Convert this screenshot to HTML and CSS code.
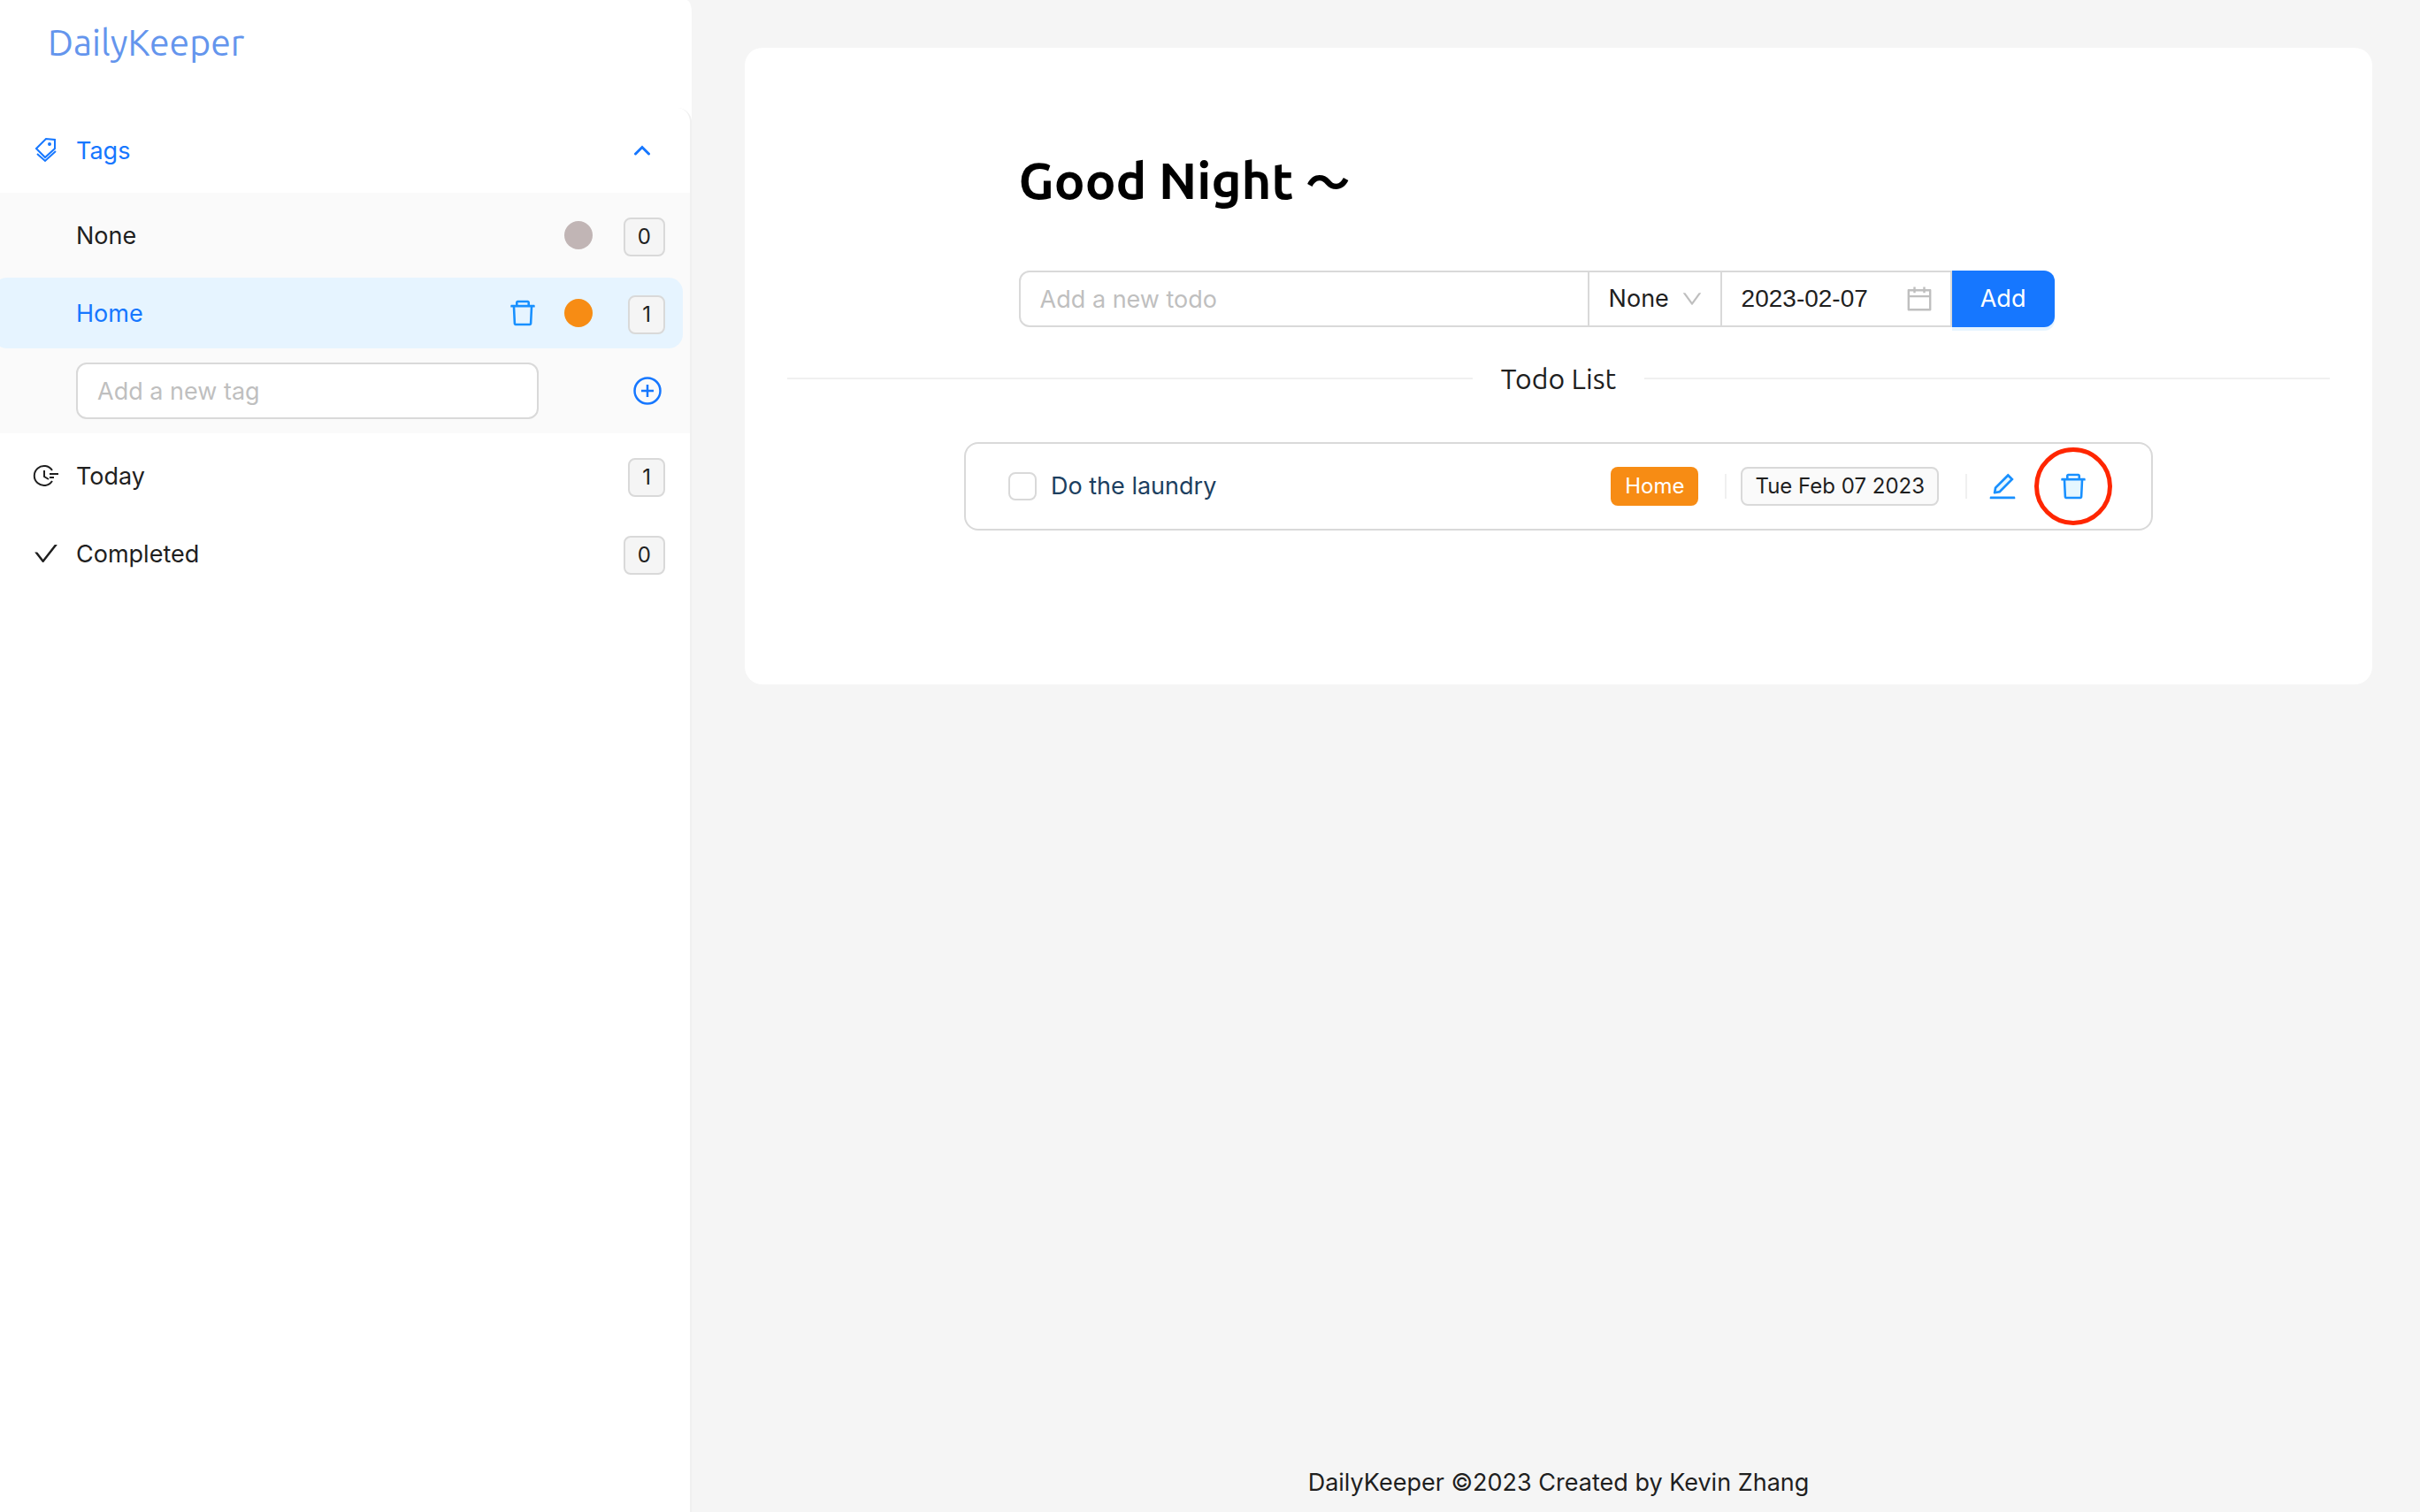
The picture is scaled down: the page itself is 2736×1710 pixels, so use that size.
FILE: index.html
```html
<!DOCTYPE html>
<html lang="en">
<head>
<meta charset="utf-8">
<title>DailyKeeper</title>
<link rel="stylesheet" href="styles.css">
</head>
<body>
<svg class="defs" aria-hidden="true">
  <symbol id="trash" viewBox="64 64 896 896"><path d="M360 184h-8c4.4 0 8-3.6 8-8v8h304v-8c0 4.4 3.6 8 8 8h-8v72h72v-80c0-35.3-28.7-64-64-64H352c-35.3 0-64 28.7-64 64v80h72v-72zm504 72H160c-17.7 0-32 14.3-32 32v32c0 4.4 3.6 8 8 8h60.4l24.7 523c1.6 34.1 29.8 61 63.9 61h454c34.2 0 62.3-26.8 63.9-61l24.7-523H888c4.4 0 8-3.6 8-8v-32c0-17.7-14.3-32-32-32zM731.3 840H292.7l-24.2-512h487l-24.2 512z"/></symbol>
</svg>
<div class="layout">
  <aside class="sider">
    <div class="sider-panel">
      <div class="brand">DailyKeeper</div>
      <nav class="menu">
        <button class="item title" type="button">
          <svg class="icon" viewBox="0 0 32 32" fill="none" stroke="currentColor" stroke-width="2"><path d="M5 14 16 3l10 1v10L15 24zM6 20l9 8 12-11"/><circle cx="20" cy="9" r="1"/></svg>
          <span class="label">Tags</span>
          <svg class="caret" viewBox="0 0 20 12" fill="none" stroke="currentColor" stroke-width="3" stroke-linecap="round"><path d="M2.5 10 10 2.5 17.5 10"/></svg>
        </button>
        <div class="submenu">
          <div class="item sub"><a class="label" href="#none">None</a><span class="dot gray"></span><span class="slot"><span class="count">0</span></span></div>
          <div class="item sub selected"><a class="label" href="#home">Home</a><button class="plain" type="button" aria-label="Delete tag"><svg class="icon" fill="#1890ff"><use href="#trash"/></svg></button><span class="dot orange"></span><span class="slot"><span class="count">1</span></span></div>
          <div class="item sub"><input class="field tag-field" type="text" placeholder="Add a new tag" aria-label="Add a new tag"><button class="plain plus" type="button" aria-label="Add tag"><svg viewBox="0 0 32 32" fill="none" stroke="currentColor" stroke-width="2.5"><circle cx="16" cy="16" r="14.5"/><path d="M9 16h14M16 9v14"/></svg></button></div>
        </div>
        <div class="item">
          <svg class="icon" viewBox="0 0 32 32" fill="none" stroke="currentColor" stroke-width="2"><path d="M23 10A11 11 0 1 0 23 22M14 10v7l5 3M20 14h10M20 18h5"/></svg>
          <a class="label" href="#today">Today</a><span class="slot"><span class="count">1</span></span>
        </div>
        <div class="item">
          <svg class="icon" viewBox="0 0 1024 1024" fill="currentColor"><path d="M912 190h-69.900c-9.800 0-19.100 4.500-25.100 12.200L404.700 724.500 207 474a32 32 0 0 0-25.100-12.200H112c-6.700 0-10.400 7.700-6.300 12.900l273.900 347c12.800 16.200 37.400 16.200 50.300 0l488.400-618.900c4.100-5.100.4-12.800-6.300-12.800z"/></svg>
          <a class="label" href="#completed">Completed</a><span class="slot"><span class="count">0</span></span>
        </div>
      </nav>
    </div>
  </aside>
  <div class="page">
    <main class="card">
      <h1 class="greeting">Good Night <span class="wave">～</span></h1>
      <form class="add-form">
        <input class="field todo-field" type="text" placeholder="Add a new todo" aria-label="Add a new todo">
        <div class="select-box">
          <select aria-label="Tag"><option>None</option><option>Home</option></select>
          <svg class="down" viewBox="64 64 896 896" fill="#bfbfbf"><path d="M884 256h-75c-5.100 0-9.900 2.500-12.900 6.600L512 654.200 227.900 262.600c-3-4.100-7.800-6.600-12.900-6.600h-75c-6.500 0-10.300 7.400-6.500 12.700l352.600 486.100c12.800 17.600 39 17.600 51.700 0l352.600-486.100c3.900-5.300.1-12.700-6.400-12.700z"/></svg>
        </div>
        <div class="date-box">
          <input type="text" value="2023-02-07" aria-label="Date">
          <svg class="calendar" viewBox="64 64 896 896" fill="#bfbfbf"><path d="M880 184H712v-64c0-4.400-3.600-8-8-8h-56c-4.400 0-8 3.600-8 8v64H384v-64c0-4.400-3.600-8-8-8h-56c-4.400 0-8 3.600-8 8v64H144c-17.700 0-32 14.300-32 32v664c0 17.700 14.300 32 32 32h736c17.700 0 32-14.300 32-32V216c0-17.700-14.300-32-32-32zm-40 656H184V460h656v380zM184 392V256h128v48c0 4.400 3.600 8 8 8h56c4.400 0 8-3.600 8-8v-48h256v48c0 4.400 3.600 8 8 8h56c4.400 0 8-3.600 8-8v-48h128v136H184z"/></svg>
        </div>
        <button class="add" type="submit">Add</button>
      </form>
      <h2 class="divider">Todo List</h2>
      <ul class="todos">
        <li class="todo">
          <label class="todo-label"><input type="checkbox">Do the laundry</label>
          <span class="tag">Home</span>
          <span class="rule"></span>
          <span class="tag date">Tue Feb 07 2023</span>
          <span class="rule"></span>
          <button class="plain edit" type="button" aria-label="Edit"><svg class="icon" viewBox="64 64 896 896" fill="#1890ff"><path fill="#e6f7ff" d="M325 578 688 215l73 73-363 363-89 16z"/><path d="M257.700 752c2 0 4-.2 6-.5L431.900 722c2-.4 3.900-1.300 5.300-2.800l423.900-423.900a9.960 9.960 0 0 0 0-14.100L694.900 114.900c-1.900-1.900-4.400-2.900-7.100-2.900s-5.200 1-7.100 2.900L256.800 538.800c-1.500 1.500-2.400 3.300-2.800 5.300l-29.500 168.200a33.500 33.500 0 0 0 9.400 29.800c6.600 6.400 14.900 9.900 23.800 9.900zm67.400-174.400L687.800 215l73.300 73.300-362.700 362.600-88.900 15.700 15.600-89zM880 836H144c-17.700 0-32 14.300-32 32v36c0 4.400 3.600 8 8 8h784c4.400 0 8-3.600 8-8v-36c0-17.700-14.300-32-32-32z"/></svg></button>
          <button class="plain remove" type="button" aria-label="Delete"><svg class="icon" viewBox="64 64 896 896" fill="#1890ff"><path fill="#e6f7ff" d="M260 320h504l-26 530H286z"/><use href="#trash" x="64" y="64" width="896" height="896"/></svg></button>
        </li>
      </ul>
    </main>
    <footer class="footer">DailyKeeper ©2023 Created by Kevin Zhang</footer>
  </div>
</div>
</body>
</html>
```
FILE: styles.css
```css
* { box-sizing: border-box; }
body {
  margin: 0;
  background: #f5f5f5;
  color: #1f1f1f;
  font: 27px/44px Inter, "Liberation Sans", sans-serif;
}
button, input, select { font: inherit; color: inherit; }
a { color: inherit; text-decoration: none; }
svg { display: block; flex: none; }
.defs { position: absolute; width: 0; height: 0; }
.layout { display: flex; min-height: 100vh; }
.icon { width: 32px; height: 32px; }
.plain { display: block; padding: 0; border: 0; background: none; }

.sider { flex: none; width: 788px; display: flex; overflow: hidden; }
.sider-panel { width: 782px; background: #fff; border-top-right-radius: 6px 14px; display: flex; flex-direction: column; }
.brand {
  height: 122px;
  padding: 24px 54px;
  color: #6495ed;
  font: 400 41px/48px Ubuntu, "Noto Sans", sans-serif;
}
.menu { flex: 1; border-right: 2px solid #f0f0f0; border-top-right-radius: 16px; }
.item {
  display: flex;
  align-items: center;
  width: 772px;
  height: 80px;
  margin: 8px 0;
  padding: 0 20px 0 36px;
}
.item .label { flex: 1; padding-top: 2px; text-align: left; }
.item > .icon { margin-right: 18px; }
.title { border: 0; background: none; color: #1677ff; }
.caret { width: 20px; height: 12px; margin-right: 16px; }
.submenu { display: flow-root; background: #fafafa; }
.sub { width: 780px; margin-left: -8px; padding-left: 94px; border-radius: 16px; }
.selected { background: #e6f4ff; color: #1677ff; }
.dot { width: 32px; height: 32px; margin-left: 31px; border-radius: 50%; }
.gray { background: #c1b5b5; }
.orange { background: #f78c14; }
.slot { display: flex; justify-content: flex-end; width: 82px; padding-top: 4px; }
.count {
  padding: 0 14px;
  border: 2px solid #d9d9d9;
  border-radius: 8px;
  background: #f5f5f5;
  color: #1f1f1f;
  font-size: 24px;
  line-height: 40px;
}
.field { height: 64px; padding: 0 22px; border: 2px solid #d9d9d9; border-radius: 12px; background: #fff; }
.field::placeholder { color: #bfbfbf; opacity: 1; }
.tag-field { width: 523px; }
.plus { width: 32px; height: 32px; margin: 0 4px 0 auto; color: #1677ff; }

.page { flex: 1; display: flex; flex-direction: column; padding: 54px 54px 0; }
.card { padding: 110px 48px 174px; border-radius: 20px; background: #fff; }
.greeting {
  margin: 0 0 62px 15%;
  color: #000;
  font: 700 58px/80px Ubuntu, "Noto Sans", "Noto Sans CJK SC", sans-serif;
}
.wave { font-size: 50px; line-height: 48px; }
.add-form { display: flex; width: 1171px; margin-left: 15%; }
.todo-field { flex: 1; min-width: 0; border-radius: 12px 0 0 12px; }
.select-box, .date-box { display: flex; align-items: center; height: 64px; border: 2px solid #d9d9d9; margin-left: -2px; }
.select-box { position: relative; width: 152px; }
.select-box select { width: 100%; height: 60px; padding: 0 22px; border: 0; background: none; appearance: none; }
.down { position: absolute; right: 20px; width: 24px; height: 24px; pointer-events: none; }
.date-box { width: 262px; padding: 0 20px 0 22px; }
.date-box input { flex: 1; min-width: 0; padding: 0; border: 0; background: none; font-family: "Liberation Sans", Arial, sans-serif; font-size: 28px; }
.calendar { width: 30px; height: 30px; }
.add { width: 116px; height: 64px; padding: 0; border: 0; border-radius: 0 12px 12px 0; background: #1677ff; color: #fff; box-shadow: 0 4px 0 rgba(5, 145, 255, 0.1); }
.divider {
  display: flex;
  align-items: center;
  gap: 32px;
  margin: 32px 0 46px;
  font: 400 32px/52px Ubuntu, "Noto Sans", sans-serif;
}
.divider::before, .divider::after { content: ""; flex: 1; height: 2px; background: #f0f0f0; }
.todos { margin: 0 200px; padding: 0; list-style: none; }
.todo { display: flex; align-items: center; height: 100px; padding: 0 48px; border: 2px solid #d9d9d9; border-radius: 16px; }
.todo-label { flex: 1; display: flex; align-items: center; gap: 16px; color: #1d3f60; }
.todo-label input { appearance: none; width: 32px; height: 32px; margin: 0; border: 2px solid #d9d9d9; border-radius: 8px; background: #fff; }
.tag { padding: 0 16px; border-radius: 8px; background: #f78c14; color: #fff; font-size: 24px; line-height: 44px; }
.date { padding: 0 14px; border: 2px solid #d9d9d9; background: #fafafa; color: #1f1f1f; line-height: 40px; }
.rule { width: 2px; height: 28px; margin: 0 16px 0 30px; background: #f0f0f0; }
.edit { margin-left: 8px; }
.remove { display: grid; place-items: center; width: 88px; height: 88px; margin: 0 -4px 0 20px; border: 5px solid #ff2600; border-radius: 50%; }
.footer { margin-top: auto; padding-bottom: 11px; text-align: center; }
```
